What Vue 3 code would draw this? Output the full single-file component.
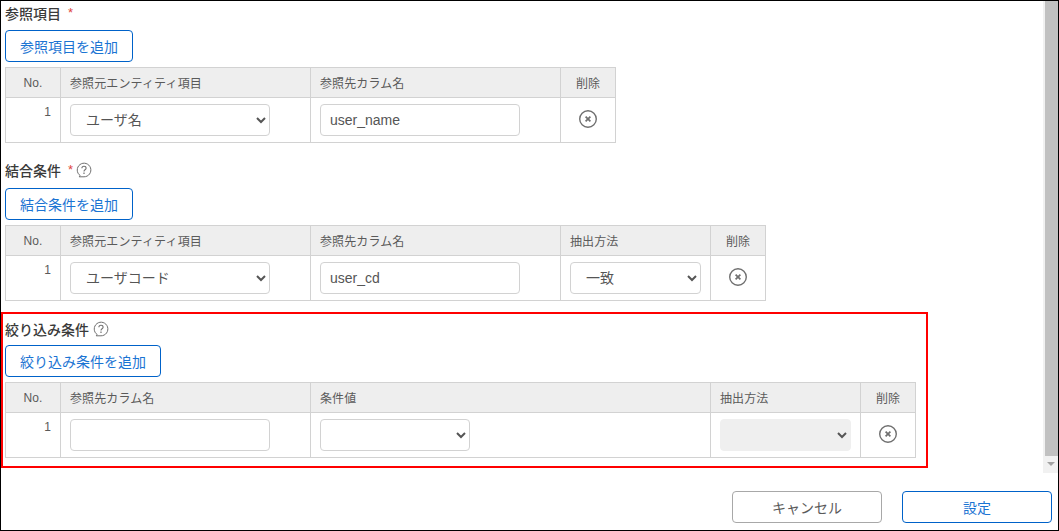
<script setup>
const sections = [
  {
    title: '参照項目',
    required: true,
    help: false,
    button: '参照項目を追加',
    columns: [
      { label: 'No.', width: 55, kind: 'no' },
      { label: '参照元エンティティ項目', width: 250, kind: 'select', value: 'ユーザ名', w: 200 },
      { label: '参照先カラム名', width: 250, kind: 'input', value: 'user_name' },
      { label: '削除', width: 55, kind: 'del' }
    ]
  },
  {
    title: '結合条件',
    required: true,
    help: true,
    button: '結合条件を追加',
    columns: [
      { label: 'No.', width: 55, kind: 'no' },
      { label: '参照元エンティティ項目', width: 250, kind: 'select', value: 'ユーザコード', w: 200 },
      { label: '参照先カラム名', width: 250, kind: 'input', value: 'user_cd' },
      { label: '抽出方法', width: 150, kind: 'select', value: '一致', w: 131 },
      { label: '削除', width: 55, kind: 'del' }
    ]
  }
]
const filter = {
  title: '絞り込み条件',
  required: false,
  help: true,
  button: '絞り込み条件を追加',
  columns: [
    { label: 'No.', width: 55, kind: 'no' },
    { label: '参照先カラム名', width: 250, kind: 'input', value: '' },
    { label: '条件値', width: 400, kind: 'select', value: '', w: 150 },
    { label: '抽出方法', width: 150, kind: 'select', value: '', w: 131, disabled: true },
    { label: '削除', width: 55, kind: 'del' }
  ]
}
const all = [...sections, filter]
</script>

<template>
  <div class="window">
    <div class="body">
      <main class="content">
        <section
          v-for="(s, i) in all"
          :key="s.title"
          class="section"
          :class="{ first: i === 0, boxed: i === 2 }"
        >
          <h3 class="title">
            <span>{{ s.title }}</span>
            <span v-if="s.required" class="req">*</span>
            <svg v-if="s.help" class="help" viewBox="0 0 16 16" width="16" height="16" fill="none" stroke="#6f6f6f">
              <path d="M4.200 13.600A6.800 6.800 0 1 1 8 14.800H3.200Z" stroke-width="1" />
              <path d="M5.900 6.300C5.900 5 6.900 4.300 8 4.300S10.100 5.100 10.100 6.200C10.100 7.800 8 7.800 8 9.400" stroke-width="1.100" />
              <path d="M8 10.500V11.900" stroke-width="1.200" />
            </svg>
          </h3>
          <button class="add" type="button">{{ s.button }}</button>
          <table class="grid">
            <colgroup>
              <col v-for="c in s.columns" :key="c.label" :style="{ width: c.width + 'px' }" />
            </colgroup>
            <thead>
              <tr>
                <th
                  v-for="c in s.columns"
                  :key="c.label"
                  :class="{ center: c.kind === 'no' || c.kind === 'del' }"
                >{{ c.label }}</th>
              </tr>
            </thead>
            <tbody>
              <tr>
                <td v-for="c in s.columns" :key="c.label" :class="'cell-' + c.kind">
                  <template v-if="c.kind === 'no'">1</template>
                  <select
                    v-else-if="c.kind === 'select'"
                    class="field sel"
                    :class="{ off: c.disabled }"
                    :style="{ width: c.w + 'px' }"
                    :disabled="c.disabled"
                  >
                    <option>{{ c.value }}</option>
                  </select>
                  <input
                    v-else-if="c.kind === 'input'"
                    class="field inp"
                    type="text"
                    :value="c.value"
                  />
                  <svg v-else class="del" viewBox="0 0 20 20" width="20" height="20" fill="none" stroke="#707070">
                    <circle cx="10" cy="10" r="8.300" stroke-width="1.400" />
                    <path d="M7.600 7.600L12.400 12.400M12.400 7.600L7.600 12.400" stroke-width="1.700" />
                  </svg>
                </td>
              </tr>
            </tbody>
          </table>
        </section>
      </main>
      <div class="scrollbar">
        <div class="thumb"></div>
        <div class="arrow"></div>
      </div>
    </div>
    <footer class="footer">
      <button class="foot cancel" type="button">キャンセル</button>
      <button class="foot ok" type="button">設定</button>
    </footer>
  </div>
</template>

<style>
html, body { margin: 0; background: #fff; }
</style>

<style scoped>
.window {
  box-sizing: border-box;
  width: 1059px;
  height: 531px;
  border: 1px solid #000;
  background: #fff;
  display: flex;
  flex-direction: column;
  overflow: hidden;
  font-family: "Liberation Sans", "Noto Sans CJK JP", sans-serif;
  color: #444;
}
.body {
  height: 472px;
  display: flex;
  flex: none;
}
.content {
  flex: 1;
  padding: 0 0 0 4px;
  min-width: 0;
}
.section {
  padding-top: 18px;
}
.section.first {
  padding-top: 3px;
}
.section.boxed {
  box-sizing: border-box;
  margin: 11px 0 0 -4px;
  padding: 6px 0 0 2px;
  width: 927px;
  height: 156px;
  border: 2px solid #f00;
}
.title {
  margin: 0;
  height: 20px;
  display: flex;
  align-items: center;
  font-size: 14px;
  line-height: 20px;
  font-weight: 500;
  color: #3a3a3a;
}
.req {
  color: #e0463c;
  margin-left: 7px;
  font-size: 13px;
  font-weight: 400;
  position: relative;
  top: -1px;
}
.help {
  margin-left: 3px;
  position: relative;
  top: -1px;
}
.boxed .help {
  margin-left: 4px;
}
.add {
  display: block;
  box-sizing: border-box;
  margin-top: 7px;
  height: 32px;
  padding: 0 14px;
  border: 1px solid #0062c9;
  border-radius: 4px;
  background: #fff;
  color: #1b74d3;
  font: inherit;
  font-size: 14px;
}
.first .add {
  margin-top: 6px;
}
.boxed .add {
  margin-top: 5px;
}
.grid {
  margin-top: 5px;
  border-collapse: collapse;
  table-layout: fixed;
  width: max-content;
  font-size: 12px;
}
th, td {
  border: 1px solid #d2d2d2;
  box-sizing: border-box;
}
th {
  height: 30px;
  padding: 0 0 0 9px;
  background: #eeeeee;
  color: #5a5a5a;
  font-weight: 400;
  text-align: left;
  letter-spacing: 0.12px;
}
th.center {
  padding: 0;
  text-align: center;
}
td {
  height: 45px;
  padding: 6px 9px;
  vertical-align: top;
}
.cell-no {
  padding: 6px 9px 0 0;
  text-align: right;
  color: #5a5a5a;
  line-height: 16px;
}
.cell-del {
  padding: 0 0 2px;
  text-align: center;
  vertical-align: middle;
}
.del {
  display: block;
  margin: 0 auto;
}
.field {
  display: block;
  box-sizing: border-box;
  height: 32px;
  border: 1px solid #d2d2d2;
  border-radius: 4px;
  background-color: #fff;
  color: #555;
  font: inherit;
  font-size: 14px;
  outline: none;
}
.inp {
  width: 200px;
  padding: 0 9px;
}
.sel {
  padding: 0 0 0 11px;
}
.sel.off {
  background-color: #efefef;
  border-color: #efefef;
  opacity: 1;
}
.scrollbar {
  width: 15px;
  flex: none;
  background: #f1f1f1;
  display: flex;
  flex-direction: column;
  align-items: center;
}
.thumb {
  width: 13px;
  height: 455px;
  align-self: flex-end;
  background: #c1c1c1;
}
.arrow {
  margin-top: 6px;
  width: 0;
  height: 0;
  border-left: 4px solid transparent;
  border-right: 4px solid transparent;
  border-top: 4px solid #a3a3a3;
}
.footer {
  flex: 1;
  display: flex;
  justify-content: flex-end;
  gap: 20px;
  padding: 18px 6px 0 0;
}
.foot {
  box-sizing: border-box;
  width: 150px;
  height: 32px;
  border-radius: 4px;
  background: #fff;
  font: inherit;
  font-size: 14px;
}
.cancel {
  border: 1px solid #a8a8a8;
  color: #5a5a5a;
}
.ok {
  border: 1px solid #0062c9;
  color: #1b74d3;
}
</style>
